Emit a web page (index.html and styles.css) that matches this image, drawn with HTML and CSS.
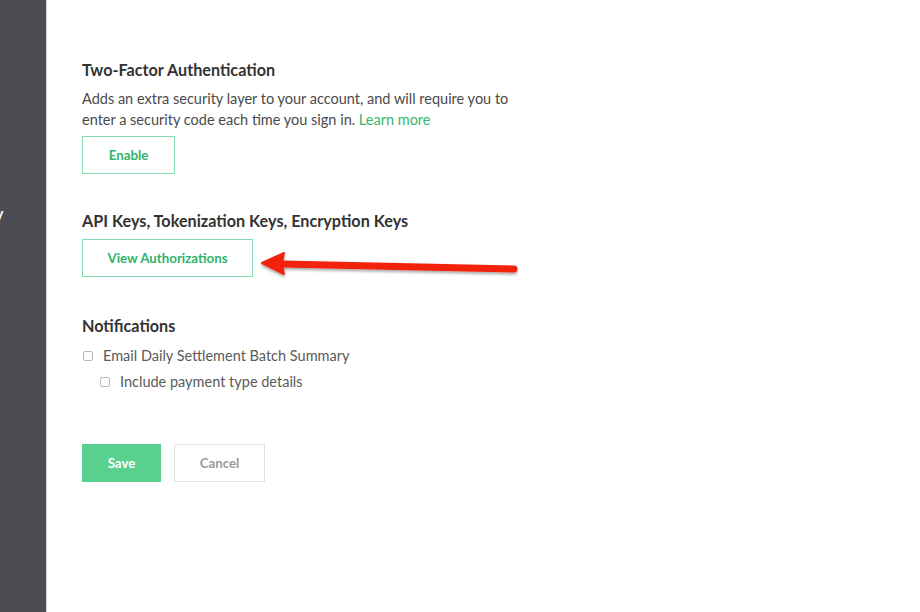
FILE: index.html
```html
<!DOCTYPE html>
<html>
<head>
<meta charset="utf-8">
<link rel="stylesheet" href="styles.css">
</head>
<body>
<div class="layout">
  <aside class="sidebar"><span class="side-text">ry</span></aside>
  <main class="main">
    <section class="section">
      <h2 class="title">Two-Factor Authentication</h2>
      <p class="desc">Adds an extra security layer to your account, and will require you to enter a security code each time you sign in. <a class="link" href="#">Learn more</a></p>
      <button class="btn btn-outline btn-enable">Enable</button>
    </section>
    <section class="section section-api">
      <h2 class="title">API Keys, Tokenization Keys, Encryption Keys</h2>
      <div class="api-row">
        <button class="btn btn-outline btn-view">View Authorizations</button>
        <svg class="arrow" width="270" height="30" viewBox="0 0 270 30">
          <defs>
            <filter id="sh" x="-10%" y="-50%" width="120%" height="200%">
              <feDropShadow dx="0" dy="2" stdDeviation="1.5" flood-color="#000" flood-opacity="0.35"/>
            </filter>
          </defs>
          <g filter="url(#sh)">
            <path d="M 28 13 L 260 18" stroke="#f2220c" stroke-width="7" stroke-linecap="round" fill="none"/>
            <path d="M 8 12 L 30 2 Q 27 12 30 23 Z" fill="#f2220c" stroke="#f2220c" stroke-width="2" stroke-linejoin="round"/>
          </g>
        </svg>
      </div>
    </section>
    <section class="section section-notif">
      <h2 class="title">Notifications</h2>
      <label class="check"><span class="box"></span>Email Daily Settlement Batch Summary</label>
      <label class="check check-sub"><span class="box"></span>Include payment type details</label>
    </section>
    <div class="actions">
      <button class="btn btn-save">Save</button>
      <button class="btn btn-cancel">Cancel</button>
    </div>
  </main>
</div>
</body>
</html>
```

FILE: styles.css
```css
html, body {
  margin: 0;
  padding: 0;
  background: #fff;
  font-family: Lato, "Open Sans", sans-serif;
}
.layout {
  display: flex;
  min-height: 612px;
}
.sidebar {
  width: 46px;
  background: #4d4c52;
  border-right: 1px solid #d4d4d6;
  flex: none;
  overflow: hidden;
  position: relative;
}
.side-text {
  position: absolute;
  left: -10px;
  top: 204px;
  color: #fff;
  font-size: 15px;
  font-weight: 700;
}
.main {
  padding: 60px 0 0 35px;
  flex: 1;
}
.section {
  margin: 0;
}
.title {
  margin: 0;
  font-size: 16.2px;
  font-weight: 700;
  color: #333;
  line-height: 20px;
}
.desc {
  margin: 8px 0 0;
  font-size: 14.5px;
  line-height: 21px;
  color: #4a4a4a;
  width: 436px;
}
.link {
  color: #35b66f;
  text-decoration: none;
}
.btn {
  font-family: Lato, "Open Sans", sans-serif;
  font-size: 13.3px;
  font-weight: 700;
  height: 38px;
  box-sizing: border-box;
  background: #fff;
  padding: 0;
  cursor: pointer;
}
.btn-outline {
  border: 1px solid #86dcae;
  color: #2fb36a;
}
.btn-enable {
  margin-top: 6px;
  width: 93px;
}
.section-api {
  margin-top: 37px;
}
.api-row {
  display: flex;
  align-items: flex-start;
  margin-top: 8px;
  position: relative;
}
.btn-view {
  width: 171px;
}
.arrow {
  position: absolute;
  left: 172px;
  top: 12px;
}
.section-notif {
  margin-top: 39px;
}
.check {
  display: flex;
  align-items: center;
  font-size: 14.5px;
  color: #5a5a5a;
  line-height: 20px;
}
.section-notif .title {
  margin-bottom: 10px;
}
.check + .check {
  margin-top: 6px;
}
.check-sub {
  padding-left: 17px;
}
.box {
  width: 8px;
  height: 8px;
  border: 1px solid #b9b9b9;
  border-radius: 2px;
  margin: 0 10px 0 1px;
  background: #fff;
}
.actions {
  display: flex;
  gap: 13px;
  margin-top: 52px;
}
.btn-save {
  width: 79px;
  background: #58d08e;
  border: 1px solid #58d08e;
  color: #fff;
}
.btn-cancel {
  width: 91px;
  border: 1px solid #e0e0e0;
  color: #9b9b9b;
}
```
